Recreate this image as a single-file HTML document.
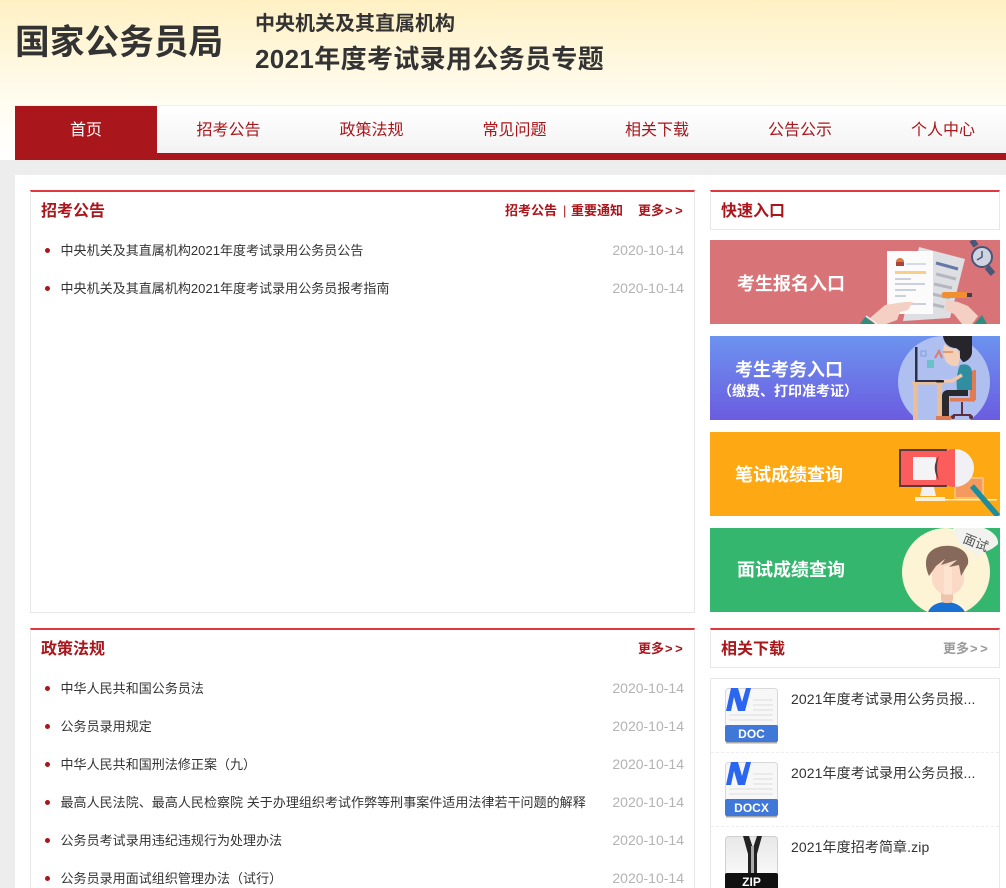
<!DOCTYPE html>
<html lang="zh-CN"><head><meta charset="utf-8"><title>国家公务员局</title>
<style>
*{margin:0;padding:0;box-sizing:border-box}
html,body{width:1006px;height:888px;overflow:hidden}
body{position:relative;background:#ededed;font-family:"Liberation Sans","Noto Sans CJK SC",sans-serif;color:#333}
.a{position:absolute;white-space:nowrap}
#hd{left:0;top:0;width:1006px;height:160px;background:linear-gradient(#fff1c4,#fffcf0 100px,#fff 160px)}
#nav{left:15px;top:106px;width:991px;height:54px;background:linear-gradient(#fff,#f3f3f3 47px);border-bottom:7px solid #a9161c;box-shadow:0 -1px 0 #f1efe8}
#nav span{position:absolute;top:0;width:143px;height:47px;line-height:50px;text-align:center;font-size:16px;color:#a9161c}
#nav span.on{background:#a9161c;color:#fff}
#main{left:15px;top:175px;width:991px;height:713px;background:#fff}
.box{position:absolute;background:#fff;border:1px solid #e8e8e8;border-top:2px solid #e0383e}
.t{position:absolute;left:10px;top:8px;font-size:16px;font-weight:bold;color:#a9161c;line-height:24px;white-space:nowrap}
.m{position:absolute;font-size:13px;font-weight:bold;color:#a9161c;line-height:18px;white-space:nowrap}
.m s{text-decoration:none;letter-spacing:2.5px;margin-left:1px}
.li{position:absolute;left:30px;width:665px;height:38px;line-height:20px;font-size:13px;color:#333}
.li i{position:absolute;left:15px;top:8px;width:5px;height:5px;border-radius:50%;background:#a9161c}
.li b{position:absolute;left:30.5px;top:1px;font-weight:normal;white-space:nowrap;letter-spacing:.04px}
.li em{position:absolute;right:11px;top:0;font-style:normal;font-size:14px;color:#b3b3b3;white-space:nowrap}
.bn{position:absolute;left:710px;width:290px;height:84px;overflow:hidden}
.bn svg{position:absolute;left:0;top:0}
.bt{position:absolute;font-size:18px;font-weight:bold;color:#fff;white-space:nowrap;line-height:24px}
#dl{left:710px;top:678px;width:290px;height:210px;border:1px solid #e8e8e8;border-bottom:0;background:#fff}
.dline{position:absolute;left:0;width:288px;border-top:1px dashed #eee}
.ft{position:absolute;left:80px;font-size:14px;line-height:20px;color:#333;white-space:nowrap;letter-spacing:.1px}
.ic{position:absolute;left:14px}
</style></head><body>
<div class="a" id="hd"></div>
<div class="a" style="left:15px;top:20px;font-size:34.7px;font-weight:bold;line-height:46px;color:#333">国家公务员局</div>
<div class="a" style="left:255px;top:9px;font-size:20px;font-weight:bold;line-height:30px;color:#333">中央机关及其直属机构</div>
<div class="a" style="left:255px;top:41px;font-size:26px;font-weight:bold;line-height:36px;color:#333;letter-spacing:.35px">2021年度考试录用公务员专题</div>
<div class="a" id="nav">
<span class="on" style="left:0;width:142px">首页</span><span style="left:142px">招考公告</span><span style="left:285px">政策法规</span><span style="left:428px">常见问题</span><span style="left:570.5px">相关下载</span><span style="left:713.5px">公告公示</span><span style="left:856.5px">个人中心</span>
</div>
<div class="a" id="main"></div>

<div class="box" style="left:30px;top:190px;width:665px;height:423px"><div class="t">招考公告</div></div>
<div class="m" style="left:505px;top:202px">招考公告</div>
<div class="m" style="left:563px;top:202px;font-weight:normal">|</div>
<div class="m" style="left:571px;top:202px">重要通知</div>
<div class="m" style="left:638px;top:202px">更多<s>&gt;&gt;</s></div>
<div class="li" style="top:240px"><i></i><b>中央机关及其直属机构2021年度考试录用公务员公告</b><em>2020-10-14</em></div>
<div class="li" style="top:278px"><i></i><b>中央机关及其直属机构2021年度考试录用公务员报考指南</b><em>2020-10-14</em></div>

<div class="box" style="left:30px;top:628px;width:665px;height:260px;border-bottom:0"><div class="t">政策法规</div></div>
<div class="m" style="left:638px;top:640px">更多<s>&gt;&gt;</s></div>
<div class="li" style="top:678px"><i></i><b>中华人民共和国公务员法</b><em>2020-10-14</em></div>
<div class="li" style="top:716px"><i></i><b>公务员录用规定</b><em>2020-10-14</em></div>
<div class="li" style="top:754px"><i></i><b>中华人民共和国刑法修正案（九）</b><em>2020-10-14</em></div>
<div class="li" style="top:792px"><i></i><b>最高人民法院、最高人民检察院 关于办理组织考试作弊等刑事案件适用法律若干问题的解释</b><em>2020-10-14</em></div>
<div class="li" style="top:830px"><i></i><b>公务员考试录用违纪违规行为处理办法</b><em>2020-10-14</em></div>
<div class="li" style="top:868px"><i></i><b>公务员录用面试组织管理办法（试行）</b><em>2020-10-14</em></div>

<div class="box" style="left:710px;top:190px;width:290px;height:40px"><div class="t">快速入口</div></div>

<div class="bn" style="top:240px;background:#d87478">
<svg width="290" height="84" viewBox="0 0 290 84">
<polygon points="209,7 255,19 240,78 193,81" fill="#dedfe2"/>
<path d="M226 34l20 5M224 44l18 4M222 54l18 4M220 64l14 3" stroke="#b4b7c0" stroke-width="3"/>
<path d="M226 23l22 6" stroke="#6678aa" stroke-width="3"/>
<rect x="177" y="11" width="46" height="63" fill="#fbfbfb"/>
<circle cx="190" cy="22" r="4" fill="#d9793f"/><rect x="186" y="22" width="8" height="4" fill="#a9443c"/>
<rect x="196" y="23" width="20" height="2" fill="#d5dbe8"/>
<rect x="185" y="31" width="31" height="3" fill="#f8cf87"/>
<path d="M185 39h16M185 44h30M185 50h21M185 56h11M187 64h29" stroke="#cbd0dc" stroke-width="2"/>
<polygon points="160,78 175,65 195,62 203,62 198,70 190,72 187,80 176,84 165,84" fill="#f4cfc4"/>
<polygon points="150,84 155,77 165,84" fill="#2e8d7e"/><path d="M156 76l11 8" stroke="#f5eee8" stroke-width="1.5"/>
<polygon points="236,60 248,62 258,66 268,76 262,84 252,84 244,74 235,70" fill="#f4cfc4"/>
<polygon points="264,84 272,75 277,84" fill="#2e8d7e"/>
<rect x="232" y="52" width="25" height="6" rx="2" fill="#ef8f2f"/><rect x="257" y="53" width="5" height="4" fill="#3d3f4f"/>
<path d="M262 0l4 6M277 27l6 7" stroke="#4a5678" stroke-width="6"/>
<circle cx="272" cy="17" r="10" fill="#cfd4e2" stroke="#4a5678" stroke-width="2"/>
<path d="M272 11v6l-5 3" stroke="#4a5678" stroke-width="1.5" fill="none"/>
</svg>
<div class="bt" style="left:27px;top:32px">考生报名入口</div></div>

<div class="bn" style="top:336px;background:linear-gradient(#6c93ef,#6b5ce0)">
<svg width="290" height="84" viewBox="0 0 290 84">
<circle cx="234" cy="46" r="46" fill="#aebff0"/>
<rect x="205" y="11" width="2.5" height="34" fill="#2a3148"/>
<rect x="205" y="44" width="25" height="2" fill="#2a3148"/>
<path d="M202 46h31v2.5h-31zM203 48h5v36h-5zM227 48h5v36h-5z" fill="#e9bd96"/>
<rect x="217" y="24" width="7" height="8" fill="#6bc0c8"/>
<path d="M225 22l4-7 3 7" stroke="#e07a6a" fill="none" stroke-width="2"/>
<rect x="211" y="15" width="5" height="5" fill="none" stroke="#7fa2e0"/>
<path d="M259 35h3l2-1h2v30h-6z" fill="#df7c55"/>
<rect x="240" y="62" width="25" height="3.5" fill="#df7c55"/>
<path d="M252 66v12M243 79h18" stroke="#5e2f3e" stroke-width="2"/>
<circle cx="243" cy="81" r="2" fill="#5e2f3e"/><circle cx="261" cy="81" r="2" fill="#5e2f3e"/>
<path d="M250 29c7-2 12 1 12 8v17h-15c-1-9 0-18 3-25z" fill="#2f8fa0"/>
<path d="M252 39l-10 6-12 0" stroke="#f1c6ab" stroke-width="3.5" fill="none"/>
<rect x="226" y="44" width="8" height="2.5" rx="1" fill="#222"/>
<path d="M232 80V60c0-4 3-6 6-6h20v6h-19v20z" fill="#2a2a2e"/>
<rect x="226" y="80" width="15" height="4" fill="#df7c55"/>
<path d="M234 8c4 4 10 5 14 5l2 9-2 8c-6 1-10-1-13-6l-2-8z" fill="#f4cfb7"/>
<path d="M233 0h29v16c0 6-6 10-9 10l-3-4v-7l-4-3c-6 0-12-4-13-12z" fill="#25252b"/>
<path d="M233 16h10" stroke="#d98a5a" stroke-width="1.5"/>
</svg>
<div class="bt" style="left:25px;top:22px">考生考务入口</div>
<div class="a" style="left:8px;top:45px;font-size:14px;font-weight:bold;color:#fff;line-height:20px">（缴费、打印准考证）</div></div>

<div class="bn" style="top:432px;background:#fea813">
<svg width="290" height="84" viewBox="0 0 290 84">
<rect x="190" y="18" width="46" height="36" fill="#fb5d5c" stroke="#5a3a3d" stroke-width="2"/>
<rect x="203" y="25" width="23" height="23" fill="#f4f4f6"/>
<path d="M212 55h12l2 9h-16z" fill="#f1f1f4"/><rect x="205" y="65" width="30" height="4" fill="#fdf0d6"/>
<rect x="245" y="46" width="28" height="20" fill="#f59a5f" stroke="#fdd9a0"/>
<rect x="230" y="67" width="57" height="1.5" fill="#fdecc8"/>
<path d="M262 54l26 30" stroke="#1f8c9b" stroke-width="5.5"/>
<circle cx="244" cy="36" r="19" fill="#fb5d5c"/>
<path d="M229 24a19 19 0 0 0 0 24q-4-12 0-24z" fill="#5a3a3d"/>
<path d="M245 17a19 19 0 0 1 0 38z" fill="#f1f1f5"/>
</svg>
<div class="bt" style="left:25px;top:31px">笔试成绩查询</div></div>

<div class="bn" style="top:528px;background:#35b66f">
<svg width="290" height="84" viewBox="0 0 290 84">
<circle cx="236" cy="44" r="44" fill="#fcf4d5"/>
<path d="M218 84c3-7 10-10 18-10s15 3 19 10z" fill="#1970d2"/>
<rect x="231" y="60" width="12" height="15" rx="4" fill="#efc4ad"/>
<path d="M222 34h32v16c0 9-7 17-16 17s-16-8-16-17z" fill="#fad9c5"/>
<rect x="234" y="38" width="8" height="28" fill="#fde3d2"/>
<path d="M219 48c-6-14-4-27 14-30 15-2 27 6 25 18l-7 12-2-11-10 2 8-7-16 5 4-6-9 7z" fill="#86695a"/>
<path d="M243 0h31c8 3 15 9 14 16-4 4-9 7-15 8l-9 6 1-7c-10 0-18-7-22-23z" fill="#f2f2ee"/>
<text x="0" y="0" transform="translate(252,14) rotate(22)" font-size="13" fill="#555" font-family="Liberation Sans,Noto Sans CJK SC,sans-serif">面试</text>
</svg>
<div class="bt" style="left:27px;top:30px">面试成绩查询</div></div>

<div class="box" style="left:710px;top:628px;width:290px;height:40px"><div class="t">相关下载</div></div>
<div class="m" style="left:943px;top:640px;color:#999">更多<s>&gt;&gt;</s></div>

<div class="a" id="dl">
<svg class="ic" style="top:9px" width="53" height="56" viewBox="0 0 53 56"><rect x="0.5" y="0.5" width="52" height="54" rx="3" fill="#f7f7f7" stroke="#d8d8d8"/><rect x="0" y="37" width="53" height="17" rx="2" fill="#3f78d8"/><path d="M1 23L6 0h7l4 14 4-14h5L20 23h-7L9 9 6 23z" fill="#2a66ef"/><path d="M28 12h20M28 17h20M28 22h20M4 27h44M4 32h44" stroke="#ddd"/><rect x="1" y="54" width="51" height="1.5" fill="#aaa"/><text x="26.5" y="50" text-anchor="middle" font-size="12" font-weight="bold" fill="#fff" font-family="Liberation Sans,sans-serif">DOC</text></svg>
<div class="ft" style="top:10px">2021年度考试录用公务员报...</div>
<div class="dline" style="top:73px"></div>
<svg class="ic" style="top:83px" width="53" height="56" viewBox="0 0 53 56"><rect x="0.5" y="0.5" width="52" height="54" rx="3" fill="#f7f7f7" stroke="#d8d8d8"/><rect x="0" y="37" width="53" height="17" rx="2" fill="#3f78d8"/><path d="M1 23L6 0h7l4 14 4-14h5L20 23h-7L9 9 6 23z" fill="#2a66ef"/><path d="M28 12h20M28 17h20M28 22h20M4 27h44M4 32h44" stroke="#ddd"/><rect x="1" y="54" width="51" height="1.5" fill="#aaa"/><text x="26.5" y="50" text-anchor="middle" font-size="12" font-weight="bold" fill="#fff" font-family="Liberation Sans,sans-serif">DOCX</text></svg>
<div class="ft" style="top:84px">2021年度考试录用公务员报...</div>
<div class="dline" style="top:147px"></div>
<svg class="ic" style="top:157px" width="53" height="56" viewBox="0 0 53 56"><defs><linearGradient id="z" x1="0" y1="0" x2="0" y2="1"><stop offset="0" stop-color="#e8e8e8"/><stop offset="1" stop-color="#fff"/></linearGradient></defs><rect x="0.5" y="0.5" width="52" height="54" rx="3" fill="url(#z)" stroke="#d0d0d0"/><rect x="0" y="37" width="53" height="17" rx="2" fill="#111"/><path d="M18 0h6l4 12 4-12h5l-5 18v19h-9V18z" fill="#222"/><rect x="26" y="10" width="3" height="27" fill="#aaa"/><text x="26.5" y="50" text-anchor="middle" font-size="12" font-weight="bold" fill="#fff" font-family="Liberation Sans,sans-serif">ZIP</text></svg>
<div class="ft" style="top:158px">2021年度招考简章.zip</div>
</div>
</body></html>
